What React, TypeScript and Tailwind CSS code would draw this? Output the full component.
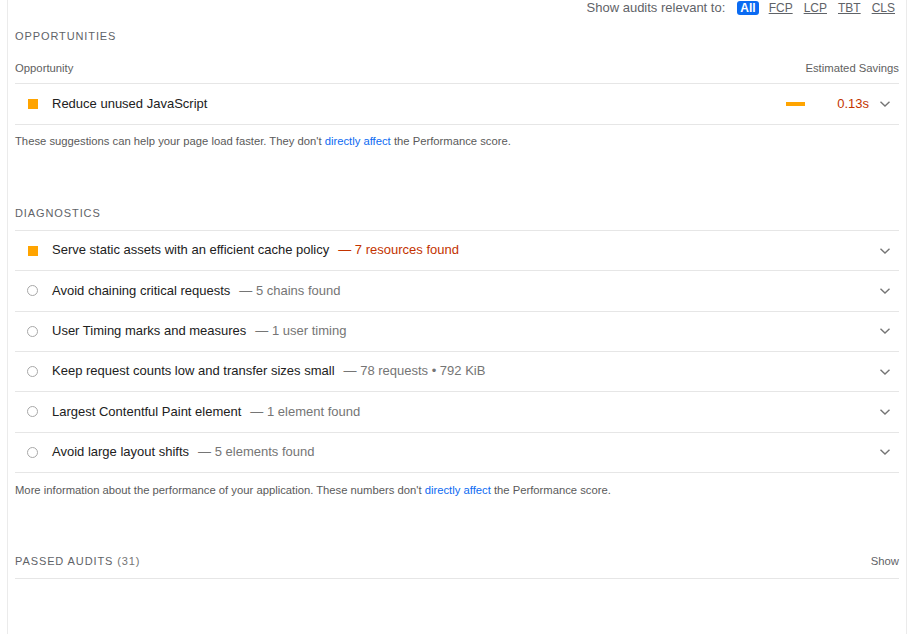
const font = { fontFamily: '"Liberation Sans", Arial, sans-serif' }

interface Diagnostic {
  title: string
  detail: string
  fail?: boolean
}

const diagnostics: Diagnostic[] = [
  { title: 'Serve static assets with an efficient cache policy', detail: '7 resources found', fail: true },
  { title: 'Avoid chaining critical requests', detail: '5 chains found' },
  { title: 'User Timing marks and measures', detail: '1 user timing' },
  { title: 'Keep request counts low and transfer sizes small', detail: '78 requests • 792 KiB' },
  { title: 'Largest Contentful Paint element', detail: '1 element found' },
  { title: 'Avoid large layout shifts', detail: '5 elements found' },
]

function Chevron() {
  return (
    <svg width="12" height="8" viewBox="0 0 12 8" className="mr-[8px]">
      <path d="M1.5 1.8 L6 6 L10.5 1.8" fill="none" stroke="#757575" strokeWidth="1.4" />
    </svg>
  )
}

function Icon({ fail }: { fail?: boolean }) {
  if (fail) return <span className="ml-[13px] mr-[14px] inline-block h-[10px] w-[10px] bg-[#ffa400]" />
  return (
    <span className="ml-[12px] mr-[14px] inline-block h-[11px] w-[11px] rounded-full border-[1.5px] border-[#a8a8a8]" />
  )
}

function SectionTitle({ children }: { children: React.ReactNode }) {
  return (
    <div className="h-4 text-[11px] uppercase leading-4 tracking-[0.9px] text-[#5f6368]">{children}</div>
  )
}

export default function App() {
  return (
    <div style={font} className="h-[634px] bg-white">
      <div className="ml-[7px] mr-[10px] h-full border-x border-[#ebebeb] px-[7px]">
        <div className="flex h-[15px] items-center justify-end text-[12px] text-[#5f6368]">
          <span className="mr-[12px] text-[13px]">Show audits relevant to:</span>
          <span className="mr-[7px] rounded-[3px] bg-[#0b6bf2] px-[3px] text-[12px] font-bold leading-[14px] text-white">
            All
          </span>
          {['FCP', 'LCP', 'TBT', 'CLS'].map((m) => (
            <span key={m} className="ml-[3px] mr-[8px] text-[#5f6368] underline last:mr-[4px]">
              {m}
            </span>
          ))}
        </div>

        <div className="mt-[13px]">
          <SectionTitle>Opportunities</SectionTitle>
        </div>
        <div className="flex justify-between border-b border-[#e6e6e6] pb-[7px] pt-4 text-[11.3px] leading-4 text-[#616161]">
          <span>Opportunity</span>
          <span>Estimated Savings</span>
        </div>
        <div className="flex h-[41px] items-center border-b border-[#e6e6e6] text-[13px]">
          <Icon fail />
          <span className="flex-1 pb-[1px] text-[#212121]">Reduce unused JavaScript</span>
          <span className="mr-[32px] h-[4px] w-[19px] bg-[#ffa400]" />
          <span className="mr-[10px] pb-[1px] text-[#c33300]">0.13s</span>
          <Chevron />
        </div>
        <p className="mt-[8px] text-[11.25px] leading-4 text-[#5a5a5a]">
          These suggestions can help your page load faster. They don't{' '}
          <span className="text-[#0c6af2]">directly affect</span> the Performance score.
        </p>

        <div className="mt-[56px]">
          <SectionTitle>Diagnostics</SectionTitle>
        </div>
        <div className="mt-[9px] border-t border-[#e6e6e6]">
          {diagnostics.map((d) => (
            <div key={d.title} className="flex h-[40.33px] items-center border-b border-[#e6e6e6] text-[13px]">
              <Icon fail={d.fail} />
              <span className="flex-1 pb-[1px]">
                <span className="text-[#212121]">{d.title}</span>
                <span className={d.fail ? 'ml-[9px] text-[#c33300]' : 'ml-[9px] text-[#757575]'}>
                  — {d.detail}
                </span>
              </span>
              <Chevron />
            </div>
          ))}
        </div>
        <p className="mt-[9px] text-[11.25px] leading-4 text-[#5a5a5a]">
          More information about the performance of your application. These numbers don't{' '}
          <span className="text-[#0c6af2]">directly affect</span> the Performance score.
        </p>

        <div className="mt-[55px] flex justify-between border-b border-[#e6e6e6] pb-[9px] text-[11px] leading-4 text-[#5f6368]">
          <span className="uppercase tracking-[0.9px]">
            Passed audits <span className="text-[#757575]">(31)</span>
          </span>
          <span className="text-[11.3px]">Show</span>
        </div>
      </div>
    </div>
  )
}
